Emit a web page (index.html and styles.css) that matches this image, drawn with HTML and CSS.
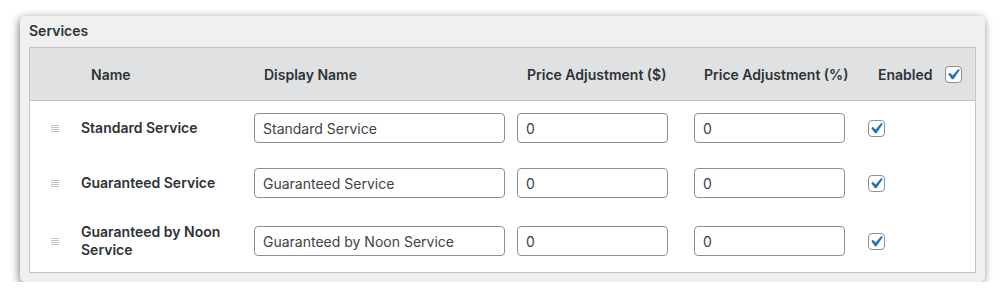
FILE: index.html
```html
<!DOCTYPE html>
<html lang="en">
  <head>
    <meta charset="UTF-8">
    <meta name="viewport" content="width=device-width, initial-scale=1.0">
    <title>Services</title>
    <link rel="stylesheet" href="styles.css">
  </head>
  <body>
    <div class="settings-card">
      <h3 class="card-title">Services</h3>
      <div class="services-table">
        <div class="services-row services-head">
          <div class="cell"></div>
          <div class="cell">Name</div>
          <div class="cell">Display Name</div>
          <div class="cell">Price Adjustment ($)</div>
          <div class="cell">Price Adjustment (%)</div>
          <div class="cell enabled-head">
            <span>Enabled</span>
            <span class="checkbox"><svg viewBox="0 0 20 20"><path d="M14.83 4.89l1.34.94-5.81 8.38H9.02L5.78 9.67l1.34-1.25 2.57 2.4z"/></svg></span>
          </div>
        </div>

        <div class="services-row">
          <div class="cell handle-cell"><span class="drag-handle"></span></div>
          <div class="cell service-name">Standard Service</div>
          <div class="cell"><input class="text-input wide" type="text" value="Standard Service"></div>
          <div class="cell"><input class="text-input" type="text" value="0"></div>
          <div class="cell"><input class="text-input" type="text" value="0"></div>
          <div class="cell">
            <span class="checkbox"><svg viewBox="0 0 20 20"><path d="M14.83 4.89l1.34.94-5.81 8.38H9.02L5.78 9.67l1.34-1.25 2.57 2.4z"/></svg></span>
          </div>
        </div>

        <div class="services-row">
          <div class="cell handle-cell"><span class="drag-handle"></span></div>
          <div class="cell service-name">Guaranteed Service</div>
          <div class="cell"><input class="text-input wide" type="text" value="Guaranteed Service"></div>
          <div class="cell"><input class="text-input" type="text" value="0"></div>
          <div class="cell"><input class="text-input" type="text" value="0"></div>
          <div class="cell">
            <span class="checkbox"><svg viewBox="0 0 20 20"><path d="M14.83 4.89l1.34.94-5.81 8.38H9.02L5.78 9.67l1.34-1.25 2.57 2.4z"/></svg></span>
          </div>
        </div>

        <div class="services-row">
          <div class="cell handle-cell"><span class="drag-handle"></span></div>
          <div class="cell service-name">Guaranteed by Noon Service</div>
          <div class="cell"><input class="text-input wide" type="text" value="Guaranteed by Noon Service"></div>
          <div class="cell"><input class="text-input" type="text" value="0"></div>
          <div class="cell"><input class="text-input" type="text" value="0"></div>
          <div class="cell">
            <span class="checkbox"><svg viewBox="0 0 20 20"><path d="M14.83 4.89l1.34.94-5.81 8.38H9.02L5.78 9.67l1.34-1.25 2.57 2.4z"/></svg></span>
          </div>
        </div>
      </div>
    </div>
  </body>
</html>
```

FILE: styles.css
```css
:root {
  --text-main: #2c3338;
  --text-input: #3c434a;
  --bg-card: #f0f0f1;
  --bg-head: #dfe1e2;
  --border-table: #c3c4c7;
  --border-input: #8c8f94;
  --check-blue: #2271b1;
}

body {
  margin: 0;
  padding: 16px 0 0 20px;
  background: #fff;
  font-family: Inter, 'Liberation Sans', Arial, sans-serif;
  font-size: 14px;
  color: var(--text-main);
}

.settings-card {
  width: 965px;
  box-sizing: border-box;
  padding: 6px 9px 9px;
  background: var(--bg-card);
  border-radius: 5px;
  box-shadow: -1px 2px 9px rgba(0, 0, 0, 0.5);
}

.card-title {
  margin: 0 0 7px;
  font-size: 14px;
  font-weight: 600;
  line-height: 18px;
  color: var(--text-main);
}

.services-table {
  border: 1px solid var(--border-table);
  background: #fff;
}

.services-row {
  display: grid;
  grid-template-columns: 41px 173px 263px 177px 174px 1fr;
  align-items: center;
  padding: 12px 0 13px;
}

.services-head {
  height: 52px;
  padding: 0;
  background: var(--bg-head);
  border-bottom: 1px solid var(--border-table);
  font-weight: 600;
}

.cell {
  padding-left: 10px;
  min-width: 0;
}

.services-head .cell {
  padding-left: 20px;
}

.enabled-head {
  display: flex;
  align-items: center;
  gap: 12px;
}

.handle-cell {
  padding-left: 21px;
  display: flex;
  align-items: center;
}

/* four thin lines, like the sort handle */
.drag-handle {
  width: 8px;
  height: 7px;
  background: repeating-linear-gradient(to bottom, #c3c4c7 0, #c3c4c7 1px, transparent 1px, transparent 2px);
}

.service-name {
  font-weight: 600;
  line-height: 18px;
  padding-right: 12px;
}

.text-input {
  box-sizing: border-box;
  width: 151px;
  height: 30px;
  margin: 0;
  padding: 0 8px;
  border: 1px solid var(--border-input);
  border-radius: 4px;
  background: #fff;
  font-family: inherit;
  font-size: 14px;
  color: var(--text-input);
}

.text-input.wide {
  width: 251px;
}

.checkbox {
  display: inline-flex;
  align-items: center;
  justify-content: center;
  box-sizing: border-box;
  width: 17px;
  height: 17px;
  border: 1px solid var(--border-input);
  border-radius: 4px;
  background: #fff;
  vertical-align: middle;
}

.checkbox svg {
  width: 23px;
  height: 23px;
  margin: -3px -3px -3px -4px;
  fill: var(--check-blue);
}
```
